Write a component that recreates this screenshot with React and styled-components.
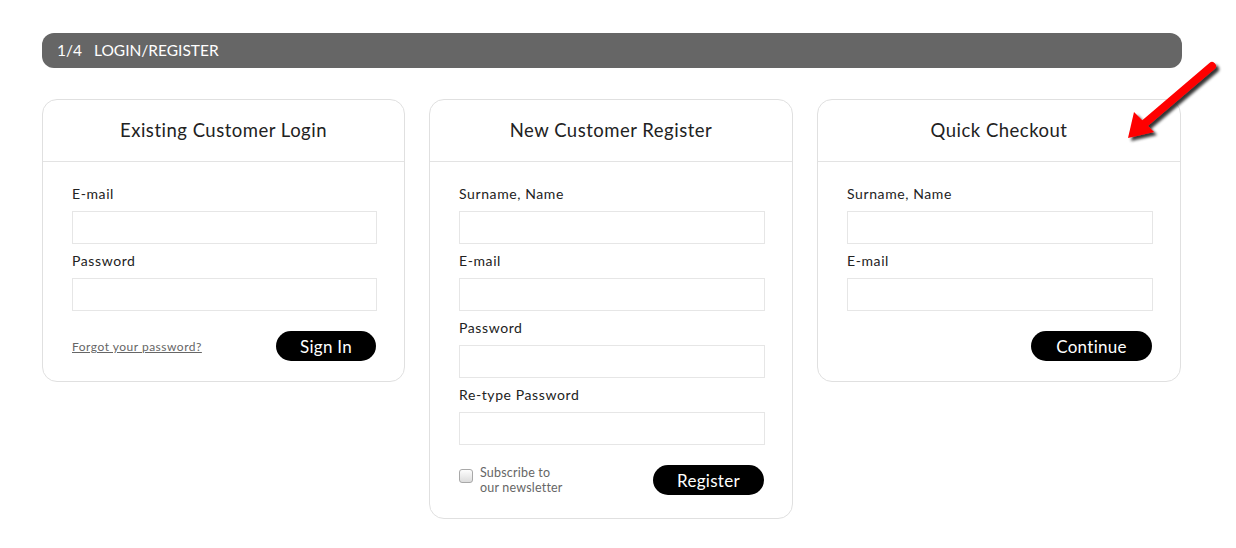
import React from 'react'
import styled, { createGlobalStyle } from 'styled-components'

const GlobalStyle = createGlobalStyle`
    body {
        margin: 0;
        background: #fff;
        font-family: "Lato", "DejaVu Sans", sans-serif;
        color: #222;
    }
`

const Page = styled.div`
    position: relative;
    width: 1236px;
    height: 548px;
    box-sizing: border-box;
    padding: 33px 0 0 42px;
`
const Wrap = styled.div`
    width: 1140px;
`
const StepBar = styled.div`
    height: 35px;
    border-radius: 12px;
    background: #666;
    color: #fff;
    font-size: 15.5px;
    line-height: 35px;
    padding-left: 15px;
    span {
        margin-right: 12px;
    }
`
const Columns = styled.div`
    display: grid;
    grid-template-columns: 363px 364px 364px;
    gap: 24px;
    margin-top: 31px;
    align-items: start;
`
const Card = styled.div`
    border: 1px solid #e0e0e0;
    border-radius: 15px;
    background: #fff;
`
const CardHead = styled.div`
    height: 61px;
    border-bottom: 1px solid #e3e3e3;
    text-align: center;
    font-size: 18.5px;
    letter-spacing: 0.5px;
    line-height: 61px;
    color: #222;
`
const CardBody = styled.div`
    padding: 23px 27px ${p => p.$bottom || 20}px 29px;
`
const Label = styled.div`
    font-size: 14px;
    letter-spacing: 0.6px;
    line-height: 18px;
    color: #222;
    margin-bottom: 8px;
`
const Input = styled.input`
    display: block;
    box-sizing: border-box;
    width: 100%;
    height: 33px;
    border: 1px solid #e6e6e6;
    margin: 0 0 8px;
    font-family: inherit;
`
const Footer = styled.div`
    display: flex;
    align-items: center;
    justify-content: ${p => p.$end ? 'flex-end' : 'space-between'};
    margin-top: 20px;
`
const Button = styled.button`
    height: 30px;
    min-width: ${p => p.$w}px;
    border: none;
    border-radius: 15px;
    background: #000;
    color: #fff;
    font-family: inherit;
    font-size: 17px;
    letter-spacing: 0.3px;
    padding: 0 20px;
    margin-right: 1px;
    cursor: pointer;
`
const Forgot = styled.a`
    font-size: 12px;
    letter-spacing: 0.5px;
    color: #666;
    text-decoration: underline;
    margin-top: 1px;
`
const Subscribe = styled.label`
    display: flex;
    align-items: flex-start;
    gap: 7px;
    font-size: 12.5px;
    letter-spacing: 0.2px;
    line-height: 15px;
    color: #666;
`
const Box = styled.span`
    width: 12px;
    height: 12px;
    margin-top: 4px;
    border: 1px solid #a8a8a8;
    border-radius: 3px;
    background: linear-gradient(#fdfdfd, #dcdcdc);
`
const Arrow = styled.svg`
    position: absolute;
    left: 1118px;
    top: 52px;
`

function Field({ label }) {
    return (
        <>
            <Label>{label}</Label>
            <Input />
        </>
    )
}

export default function App() {
    return (
        <Page>
            <GlobalStyle />
            <Wrap>
                <StepBar><span>1/4</span>LOGIN/REGISTER</StepBar>
                <Columns>
                    <Card>
                        <CardHead>Existing Customer Login</CardHead>
                        <CardBody>
                            <Field label="E-mail" />
                            <Field label="Password" />
                            <Footer>
                                <Forgot href="#">Forgot your password?</Forgot>
                                <Button $w={100}>Sign In</Button>
                            </Footer>
                        </CardBody>
                    </Card>
                    <Card>
                        <CardHead>New Customer Register</CardHead>
                        <CardBody $bottom={23}>
                            <Field label="Surname, Name" />
                            <Field label="E-mail" />
                            <Field label="Password" />
                            <Field label="Re-type Password" />
                            <Footer>
                                <Subscribe><Box />Subscribe to<br />our newsletter</Subscribe>
                                <Button $w={111}>Register</Button>
                            </Footer>
                        </CardBody>
                    </Card>
                    <Card>
                        <CardHead>Quick Checkout</CardHead>
                        <CardBody>
                            <Field label="Surname, Name" />
                            <Field label="E-mail" />
                            <Footer $end>
                                <Button $w={121}>Continue</Button>
                            </Footer>
                        </CardBody>
                    </Card>
                </Columns>
            </Wrap>
            <Arrow width="110" height="100" viewBox="0 0 110 100">
                <defs>
                    <filter id="sh" x="-20%" y="-20%" width="150%" height="150%">
                        <feGaussianBlur in="SourceAlpha" stdDeviation="1.6" />
                        <feOffset dx="3" dy="3" result="b" />
                        <feComponentTransfer><feFuncA type="linear" slope="0.8" /></feComponentTransfer>
                        <feMerge><feMergeNode /><feMergeNode in="SourceGraphic" /></feMerge>
                    </filter>
                </defs>
                <g filter="url(#sh)">
                    <line x1="94" y1="14" x2="26" y2="72" stroke="#f00" strokeWidth="8" strokeLinecap="round" />
                    <polygon points="10,86 16,60 36,80" fill="#f00" />
                </g>
            </Arrow>
        </Page>
    )
}
